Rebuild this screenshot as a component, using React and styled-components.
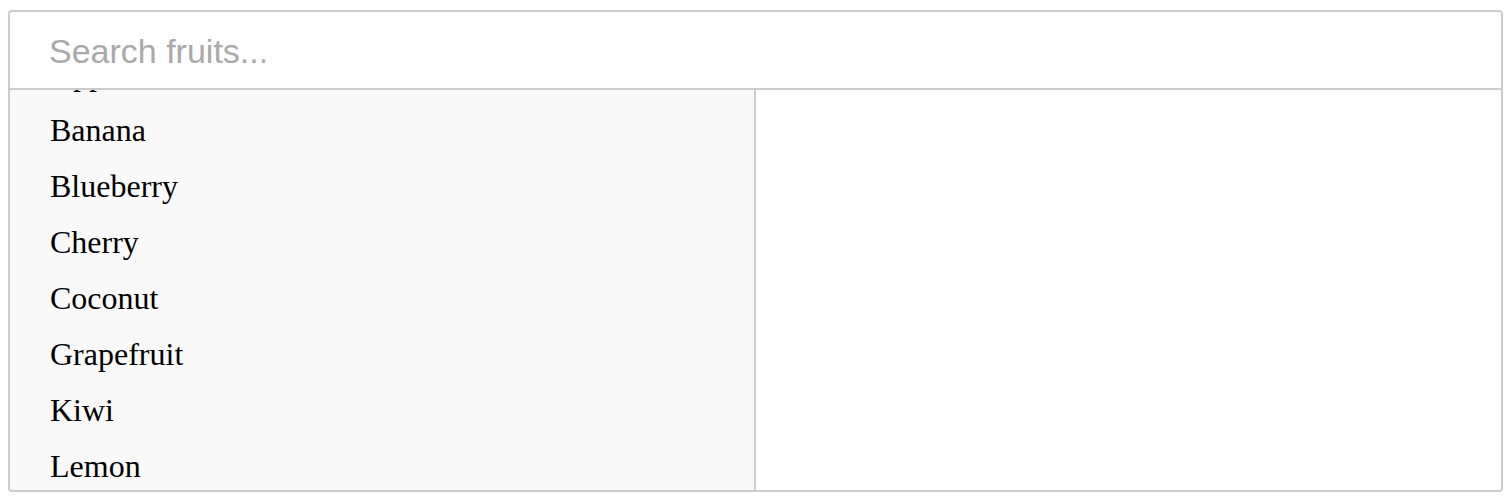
import React, { useEffect, useRef, useState } from 'react'
import styled, { createGlobalStyle } from 'styled-components'

const FRUITS = [
  'Apple', 'Banana', 'Blueberry', 'Cherry', 'Coconut', 'Grapefruit',
  'Kiwi', 'Lemon', 'Lime', 'Mango', 'Orange', 'Papaya', 'Peach',
  'Pear', 'Pineapple', 'Strawberry', 'Watermelon'
]

const GlobalStyle = createGlobalStyle`
  html, body {
    margin: 0;
    background: #fff;
  }
  body {
    padding: 10px 9px 0 8px;
  }
`

const Picker = styled.div`
  border: 2px solid #ccc;
  border-radius: 4px;
  overflow: hidden;
  background: #fff;
`

const SearchInput = styled.input`
  display: block;
  box-sizing: border-box;
  width: 100%;
  height: 78px;
  margin: 0;
  padding: 3px 39px 0;
  border: none;
  border-bottom: 2px solid #ccc;
  outline: none;
  font-family: "Liberation Sans", Arial, sans-serif;
  font-size: 34px;
  color: #222;
  background: #fff;

  &::placeholder {
    color: #a9a9a9;
  }
`

const Body = styled.div`
  display: grid;
  grid-template-columns: 746px 1fr;
  height: 400px;
`

const List = styled.ul`
  margin: 0;
  padding: 0;
  list-style: none;
  overflow-y: auto;
  background: #f9f9f9;
  border-right: 2px solid #ccc;
  scrollbar-width: none;

  &::-webkit-scrollbar {
    display: none;
  }
`

const Item = styled.li`
  padding: 0 40px;
  line-height: 56px;
  font-family: "Liberation Serif", "Times New Roman", serif;
  font-size: 32px;
  color: #000;
  cursor: pointer;
  white-space: nowrap;
`

const Detail = styled.div`
  background: #fff;
`

export default function App () {
  const [query, setQuery] = useState('')
  const listRef = useRef(null)

  // list is scrolled a little, Apple is cut at the top
  useEffect(() => {
    if (listRef.current) listRef.current.scrollTop = 44
  }, [])

  const shown = FRUITS.filter(f => f.toLowerCase().includes(query.toLowerCase()))

  return (
    <>
      <GlobalStyle />
      <Picker>
        <SearchInput
          placeholder='Search fruits...'
          value={query}
          onChange={e => setQuery(e.target.value)}
        />
        <Body>
          <List ref={listRef}>
            {shown.map(f => <Item key={f}>{f}</Item>)}
          </List>
          <Detail />
        </Body>
      </Picker>
    </>
  )
}
